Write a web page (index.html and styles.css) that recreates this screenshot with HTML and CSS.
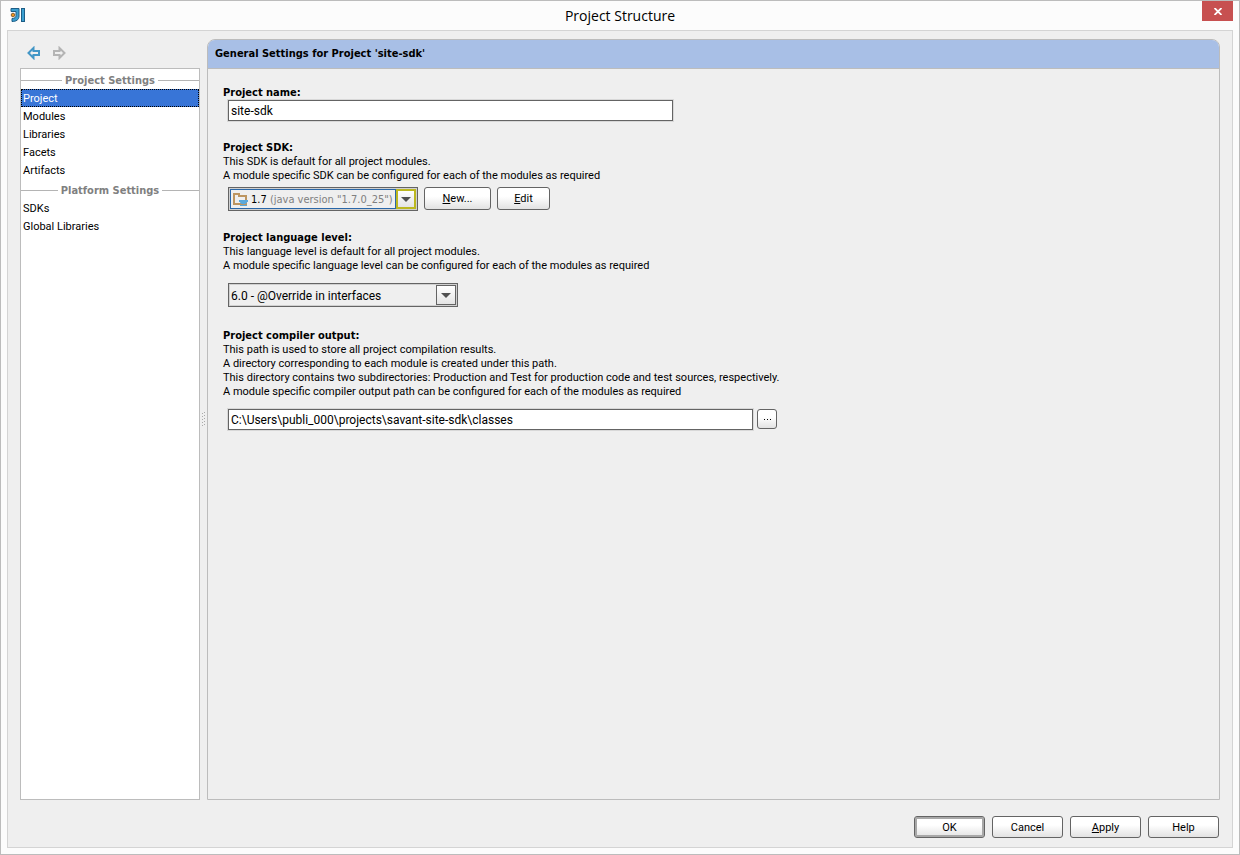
FILE: index.html
```html
<!DOCTYPE html>
<html lang="en">
<head>
	<meta charset="UTF-8">
	<title>Project Structure</title>
	<link rel="stylesheet" href="styles.css">
</head>
<body>
	<div class="window">
		<header class="titlebar">
			<svg class="logo" width="16" height="16" viewBox="0 0 16 16">
				<path d="M1 .5h8v7.500c0 4-3 5.500-7 5.500v-3c2.500 0 4-1 4-3V3.500H1z" fill="#3a9fd0" stroke="#1d5d86"/>
				<rect x="11.500" y=".5" width="3" height="13" fill="#3a9fd0" stroke="#1d5d86"/>
				<circle cx="3" cy="7" r="1.800" fill="#f0941e" stroke="#6b4a1e" stroke-width=".8"/>
			</svg>
			<h1>Project Structure</h1>
			<button type="button" class="close" aria-label="Close">
				<svg width="8" height="7" viewBox="0 0 8 7"><path d="M.5 0l7 7m0-7l-7 7" stroke="#fff" stroke-width="1.800"/></svg>
			</button>
		</header>

		<div class="content">
			<main class="columns">
				<aside class="side">
					<div class="history">
						<button type="button" aria-label="Back">
							<svg width="14" height="14" viewBox="0 0 14 14"><path d="M1.500 7l5-5v3H12v4H6.500v3z" fill="none" stroke="#4296c6" stroke-width="2"/></svg>
						</button>
						<button type="button" aria-label="Forward">
							<svg width="14" height="14" viewBox="0 0 14 14"><path d="M12.500 7l-5-5v3H2v4h5.500v3z" fill="none" stroke="#b4b4b4" stroke-width="2"/></svg>
						</button>
					</div>
					<nav class="list">
						<h2>Project Settings</h2>
						<a href="#project" class="active">Project</a>
						<a href="#modules">Modules</a>
						<a href="#libraries">Libraries</a>
						<a href="#facets">Facets</a>
						<a href="#artifacts">Artifacts</a>
						<h2>Platform Settings</h2>
						<a href="#sdks">SDKs</a>
						<a href="#global">Global Libraries</a>
					</nav>
				</aside>
				<div class="splitter">
					<svg width="4" height="16" viewBox="0 0 4 16" fill="#aaa">
						<path d="M0 1h1v1H0zM2 0h1v1H2zM0 4h1v1H0zM2 3h1v1H2zM0 7h1v1H0zM2 6h1v1H2zM0 10h1v1H0zM2 9h1v1H2zM0 13h1v1H0zM2 12h1v1H2z"/>
					</svg>
				</div>
				<section class="panel">
					<h2 class="panel-title">General Settings for Project 'site-sdk'</h2>
					<form class="settings">
						<div class="group">
							<label class="name" for="name">Project name:</label>
							<input type="text" id="name" class="field" value="site-sdk">
						</div>

						<div class="group">
							<label class="name" for="sdk">Project SDK:</label>
							<p>This SDK is default for all project modules.</p>
							<p>A module specific SDK can be configured for each of the modules as required</p>
							<div class="row">
								<div class="combo combo-sdk">
									<select id="sdk">
										<option>1.7 (java version "1.7.0_25")</option>
									</select>
									<div class="value"><b>1.7</b> (java version "1.7.0_25")</div>
									<svg class="folder" width="16" height="14" viewBox="0 0 16 14">
										<path d="M1 1h5v2h7v8H1z" fill="none" stroke="#bd9560" stroke-width="2"/>
										<path d="M6 7h9v2h-1c0 3-7 3-7 0H6z" fill="#5aa9dc"/>
										<path d="M7 12.500h7" stroke="#5aa9dc"/>
									</svg>
									<span class="arrow"></span>
								</div>
								<button type="button" class="btn new"><u>N</u>ew...</button>
								<button type="button" class="btn edit"><u>E</u>dit</button>
							</div>
						</div>

						<div class="group">
							<label class="name" for="level">Project language level:</label>
							<p>This language level is default for all project modules.</p>
							<p>A module specific language level can be configured for each of the modules as required</p>
							<div class="row row-low">
								<div class="combo combo-level">
									<select id="level">
										<option>6.0 - @Override in interfaces</option>
									</select>
									<span class="arrow"></span>
								</div>
							</div>
						</div>

						<div class="group">
							<label class="name" for="output">Project compiler output:</label>
							<p>This path is used to store all project compilation results.</p>
							<p>A directory corresponding to each module is created under this path.</p>
							<p>This directory contains two subdirectories: Production and Test for production code and test sources, respectively.</p>
							<p>A module specific compiler output path can be configured for each of the modules as required</p>
							<div class="row row-low">
								<input type="text" id="output" class="field field-path" value="C:\Users\publi_000\projects\savant-site-sdk\classes">
								<button type="button" class="btn browse" aria-label="Browse">
									<svg width="7" height="1" viewBox="0 0 7 1"><path d="M0 0h1v1H0zM3 0h1v1H3zM6 0h1v1H6z"/></svg>
								</button>
							</div>
						</div>
					</form>
				</section>
			</main>

			<footer class="buttons">
				<button type="button" class="btn ok">OK</button>
				<button type="button" class="btn">Cancel</button>
				<button type="button" class="btn"><u>A</u>pply</button>
				<button type="button" class="btn">Help</button>
			</footer>
		</div>
	</div>
</body>
</html>
```
FILE: styles.css
```css
*{
	box-sizing: border-box;
	margin: 0;
	padding: 0;
}

body, button, input, select{
	font-family: Tahoma, Roboto, "Noto Sans", sans-serif;
	font-size: 11px;
	color: #000;
}

svg{
	display: block;
}

.window{
	display: flex;
	flex-direction: column;
	min-height: 100vh;
	padding: 0 6px 6px;
	background-color: #fcfcfc;
	border: 1px solid #bcbcbc;
}

/* title bar */
.titlebar{
	display: grid;
	grid-template-columns: 31px 1fr 31px;
	height: 29px;
}

.logo{
	margin: 7px 0 0 3px;
}

.titlebar h1{
	font: 14px/29px "Open Sans", sans-serif;
	text-align: center;
}

.close{
	display: flex;
	justify-content: center;
	align-items: center;
	height: 20px;
	background-color: #c75050;
	border: 0;
}

.content{
	display: flex;
	flex-direction: column;
	flex: 1;
	padding: 8px 12px 9px;
	background-color: #efefef;
	border: 1px solid #d4d4d4;
}

.columns{
	display: flex;
	flex: 1;
}

/* left list */
.side{
	display: flex;
	flex-direction: column;
	width: 180px;
}

.history{
	display: flex;
	gap: 11px;
	height: 29px;
	padding: 7px 0 0 7px;
}

.history button{
	width: 14px;
	height: 14px;
	background: none;
	border: 0;
}

.list{
	flex: 1;
	background-color: #fff;
	border: 1px solid #bcbcbc;
}

.list h2,
.panel-title,
.name{
	font: bold 11px/14px Tahoma, "DejaVu Sans Condensed", sans-serif;
}

.list h2{
	display: flex;
	align-items: center;
	gap: 3px;
	height: 20px;
	padding-top: 3px;
	color: #808080;
}

.list h2:before,
.list h2:after{
	content: "";
	flex: 1;
	height: 1px;
	background-color: #b4b4b4;
}

.list a{
	display: block;
	height: 18px;
	padding: 1px 2px 0;
	line-height: 18px;
	color: #000;
	text-decoration: none;
}

.list a.active{
	padding: 1px 1px 0;
	line-height: 16px;
	color: #fff;
	background-color: #3875d7;
	border: 1px dotted #000;
}

.splitter{
	display: flex;
	align-items: center;
	justify-content: center;
	width: 7px;
}

/* right panel */
.panel{
	flex: 1;
	border: 1px solid #bcbcbc;
	border-radius: 8px 8px 0 0;
}

.panel-title{
	height: 29px;
	padding-left: 7px;
	line-height: 27px;
	background-color: #a8bfe6;
	border-bottom: 1px solid #bcbcbc;
	border-radius: 7px 7px 0 0;
}

.settings{
	padding: 17px 15px;
}

.group{
	margin-bottom: 20px;
	line-height: 14px;
}

.name{
	display: block;
}

.row{
	display: flex;
	gap: 6px;
	margin-top: 4px;
}

.row-low{
	gap: 4px;
	margin: 10px 0 22px;
}

.field{
	display: block;
	width: 445px;
	height: 21px;
	margin-left: 5px;
	padding: 1px 2px 0;
	font-size: 12px;
	background-color: #fff;
	border: 1px solid #646464;
	outline: 1px solid #d8d8d8;
}

.field-path{
	width: 525px;
}

.combo{
	position: relative;
	height: 24px;
	margin-left: 5px;
	border: 1px solid #646464;
	outline: 1px solid #d0d0d0;
	outline-offset: -2px;
}

.combo select{
	width: 100%;
	height: 100%;
	padding: 1px 0 0 2px;
	font-size: 12px;
	background: none;
	border: 0;
	appearance: none;
}

.combo-sdk{
	width: 190px;
}

.combo-sdk select{
	color: transparent;
}

.combo-level{
	width: 230px;
}

/* picked SDK, drawn over the select */
.value{
	position: absolute;
	top: 1px;
	left: 1px;
	width: 166px;
	height: 20px;
	padding-left: 20px;
	font: 11px/20px Tahoma, "DejaVu Sans Condensed", sans-serif;
	color: #808080;
	white-space: nowrap;
	border: 1px solid #2a67a8;
	pointer-events: none;
}

.value b{
	font-weight: normal;
	color: #000;
}

.folder{
	position: absolute;
	top: 5px;
	left: 4px;
	pointer-events: none;
}

.arrow{
	position: absolute;
	top: 1px;
	right: 1px;
	width: 20px;
	height: 20px;
	background: linear-gradient(#fff, #e4e4e4);
	border: 1px solid #646464;
	pointer-events: none;
}

.combo-sdk .arrow{
	border: 2px solid #bcb820;
}

.arrow:after{
	content: "";
	position: absolute;
	top: 50%;
	left: 50%;
	margin: -2px 0 0 -5px;
	border: 5px solid transparent;
	border-top-color: #505050;
	border-bottom: 0;
}

.btn{
	height: 22px;
	width: 71px;
	background: linear-gradient(#fff 40%, #e2e2e2);
	border: 1px solid #646464;
	border-radius: 3px;
}

.new{
	width: 67px;
	height: 23px;
}

.edit{
	width: 53px;
	height: 23px;
}

.browse{
	display: flex;
	align-items: center;
	justify-content: center;
	width: 20px;
	height: 20px;
}

.buttons{
	display: flex;
	justify-content: flex-end;
	gap: 7px;
	padding: 16px 1px 0 0;
}

.ok{
	box-shadow: inset 0 0 0 2px #a8a8a8;
}
```
